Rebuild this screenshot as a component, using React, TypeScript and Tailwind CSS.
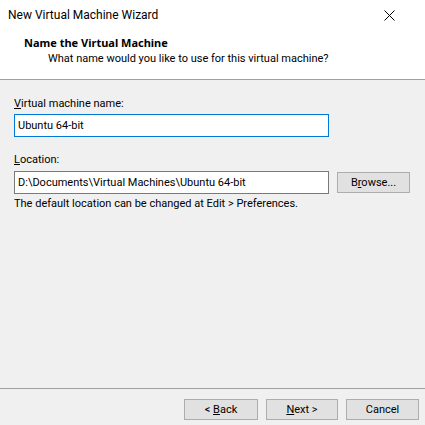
import React from "react";

function Btn({ children, className = "" }: { children: React.ReactNode; className?: string }) {
  return (
    <div
      className={`flex items-center justify-center h-[21px] border border-[#adadad] bg-[#e1e1e1] text-[11px] text-black ${className}`}
    >
      {children}
    </div>
  );
}

export default function App() {
  return (
    <div className="w-[425px] h-[425px] flex flex-col bg-[#f0f0f0] text-black text-[11px] leading-[16px] overflow-hidden font-['Roboto',sans-serif]">
      <div className="bg-white h-[79px] flex flex-col">
        <div className="h-[30px] flex items-center justify-between pl-[8px] pr-[30px]">
          <span className="text-[12px]">New Virtual Machine Wizard</span>
          <svg width="11" height="11" viewBox="0 0 11 11" className="mt-[1px]">
            <path d="M0.5 0.5 L10.5 10.5 M10.5 0.5 L0.5 10.5" stroke="#000" strokeWidth="1" />
          </svg>
        </div>
        <div className="pl-[24px] pt-[5px] font-bold font-['Noto_Sans',sans-serif]">Name the Virtual Machine</div>
        <div className="pl-[48px]">What name would you like to use for this virtual machine?</div>
      </div>
      <div className="h-px bg-[#a0a0a0]" />
      <div className="flex-1 flex flex-col px-[14px] pt-[16px]">
        <div>
          <span className="underline">V</span>irtual machine name:
        </div>
        <div className="mt-[2px] w-[315px] h-[23px] border border-[#0078d7] bg-white flex items-center pl-[3px]">
          Ubuntu 64-bit
        </div>
        <div className="mt-[15px]">
          <span className="underline">L</span>ocation:
        </div>
        <div className="mt-[3px] flex items-center gap-[8px]">
          <div className="w-[315px] h-[23px] border border-[#7a7a7a] bg-white flex items-center pl-[3px]">
            D:\Documents\Virtual Machines\Ubuntu 64-bit
          </div>
          <Btn className="w-[73px]">
            <span>
              B<span className="underline">r</span>owse...
            </span>
          </Btn>
        </div>
        <div className="mt-[2px]">The default location can be changed at Edit &gt; Preferences.</div>
      </div>
      <div className="h-px bg-[#a0a0a0] mb-[10px]" />
      <div className="flex justify-end gap-[8px] pr-[6px] pb-[5px]">
        <Btn className="w-[74px] h-[20px]">
          <span>
            &lt; <span className="underline">B</span>ack
          </span>
        </Btn>
        <Btn className="w-[72px] h-[20px]">
          <span>
            <span className="underline">N</span>ext &gt;
          </span>
        </Btn>
        <Btn className="w-[73px] h-[20px]">Cancel</Btn>
      </div>
    </div>
  );
}
